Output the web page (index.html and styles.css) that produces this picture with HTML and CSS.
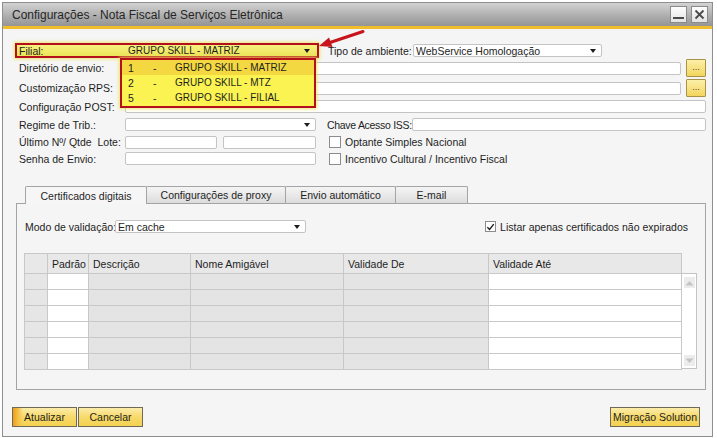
FILE: index.html
```html
<!DOCTYPE html>
<html lang="pt">
<head>
<meta charset="utf-8">
<title>Configurações - Nota Fiscal de Serviços Eletrônica</title>
<link rel="stylesheet" href="styles.css">
</head>
<body>
<div class="window">
  <div class="titlebar">
    <span class="title">Configurações - Nota Fiscal de Serviços Eletrônica</span>
    <div class="wbtns">
      <span class="wbtn"><svg width="15" height="15" viewBox="0 0 15 15"><rect x="2" y="10" width="11" height="2" fill="#4a4a4a"/></svg></span>
      <span class="wbtn"><svg width="15" height="15" viewBox="0 0 15 15"><path d="M3.5 3.5 L11.5 11.5 M11.5 3.5 L3.5 11.5" stroke="#4a4a4a" stroke-width="1.8" fill="none"/></svg></span>
    </div>
  </div>
  <div class="client">
    <div class="form">
      <div class="row r1">
        <div class="filial">
          <span class="lbl">Filial:</span>
          <div class="combo combo-hl"><span class="ctext caps">GRUPO SKILL - MATRIZ</span><span class="arrow"></span></div>
          <div class="dropdown">
            <div class="opt sel"><span class="n">1</span><span class="d">-</span><span class="caps">GRUPO SKILL - MATRIZ</span></div>
            <div class="opt"><span class="n">2</span><span class="d">-</span><span class="caps">GRUPO SKILL - MTZ</span></div>
            <div class="opt"><span class="n">5</span><span class="d">-</span><span class="caps">GRUPO SKILL - FILIAL</span></div>
          </div>
        </div>
        <span class="lbl2 lbl-tipo">Tipo de ambiente:</span>
        <div class="combo w-tipo"><span class="ctext">WebService Homologação</span><span class="arrow"></span></div>
      </div>
      <div class="row r2">
        <span class="lbl">Diretório de envio:</span>
        <div class="inp w-long"></div>
        <div class="ddd">...</div>
      </div>
      <div class="row r3">
        <span class="lbl">Customização RPS:</span>
        <div class="inp w-long"></div>
        <div class="ddd">...</div>
      </div>
      <div class="row r4">
        <span class="lbl">Configuração POST:</span>
        <div class="inp w-full"></div>
      </div>
      <div class="row r5">
        <span class="lbl">Regime de Trib.:</span>
        <div class="combo w-field"><span class="ctext"></span><span class="arrow"></span></div>
        <span class="lbl2 lbl-chave">Chave Acesso ISS:</span>
        <div class="inp w-chave"></div>
      </div>
      <div class="row r6">
        <span class="lbl">Último Nº/ Qtde&nbsp; Lote:</span>
        <div class="inp w-half1"></div>
        <div class="inp w-half2"></div>
        <span class="chk"></span><span class="chk-lbl">Optante Simples Nacional</span>
      </div>
      <div class="row r7">
        <span class="lbl">Senha de Envio:</span>
        <div class="inp w-field"></div>
        <span class="chk"></span><span class="chk-lbl">Incentivo Cultural / Incentivo Fiscal</span>
      </div>
    </div>

    <div class="tabsec">
      <div class="tabstrip">
        <div class="tab active t1">Certificados digitais</div>
        <div class="tab t2">Configurações de proxy</div>
        <div class="tab t3">Envio automático</div>
        <div class="tab t4">E-mail</div>
      </div>
      <div class="panel">
        <div class="modo-row">
          <span class="modo-lbl">Modo de validação:</span>
          <div class="combo w-field"><span class="ctext">Em cache</span><span class="arrow"></span></div>
          <div class="listar">
            <span class="chk checked"><svg width="10" height="10" viewBox="0 0 10 10"><path d="M1.5 5.2 L4 7.8 L8.6 1.8" stroke="#1e1e1e" stroke-width="1.6" fill="none"/></svg></span>
            <span class="chk-lbl">Listar apenas certificados não expirados</span>
          </div>
        </div>
        <div class="gridwrap">
          <table class="grid">
            <colgroup>
              <col class="c0"><col class="c1"><col class="c2"><col class="c3"><col class="c4"><col class="c5">
            </colgroup>
            <thead>
              <tr><th></th><th>Padrão</th><th>Descrição</th><th>Nome Amigável</th><th>Validade De</th><th>Validade Até</th></tr>
            </thead>
            <tbody>
              <tr><td class="rh"></td><td class="w"></td><td></td><td></td><td></td><td class="w"></td></tr>
              <tr><td class="rh"></td><td class="w"></td><td></td><td></td><td></td><td class="w"></td></tr>
              <tr><td class="rh"></td><td class="w"></td><td></td><td></td><td></td><td class="w"></td></tr>
              <tr><td class="rh"></td><td class="w"></td><td></td><td></td><td></td><td class="w"></td></tr>
              <tr><td class="rh"></td><td class="w"></td><td></td><td></td><td></td><td class="w"></td></tr>
              <tr><td class="rh"></td><td class="w"></td><td></td><td></td><td></td><td class="w"></td></tr>
            </tbody>
          </table>
          <div class="vscroll">
            <span class="sbtn"><svg width="9" height="6" viewBox="0 0 9 6"><path d="M0.5 5.5 L4.5 1 L8.5 5.5 Z" fill="#c4c4c4"/></svg></span>
            <span class="sbtn"><svg width="9" height="6" viewBox="0 0 9 6"><path d="M0.5 0.5 L4.5 5 L8.5 0.5 Z" fill="#c4c4c4"/></svg></span>
          </div>
        </div>
      </div>
    </div>

    <div class="footer">
      <div class="btn btn-default">Atualizar</div>
      <div class="btn btn-cancel">Cancelar</div>
      <div class="btn btn-mig">Migração Solution</div>
    </div>
  </div>

  <svg class="callout" width="52" height="24" viewBox="0 0 52 24">
    <path d="M47 3.5 L14 14.5" stroke="#c8141c" stroke-width="3" stroke-linecap="round" fill="none"/>
    <path d="M3 18 L13 9.5 L16.5 19 Z" fill="#c8141c"/>
  </svg>
</div>
</body>
</html>
```
FILE: styles.css
```css
* { box-sizing: border-box; }
html, body { margin: 0; padding: 0; }
body {
  width: 717px;
  height: 438px;
  overflow: hidden;
  background: #ffffff;
  font-family: "Liberation Sans", Arial, sans-serif;
  font-size: 10.5px;
  color: #1e1e1e;
}
.window {
  position: relative;
  margin: 2px 0 0 2px;
  width: 711px;
  height: 435px;
  border: 1px solid #8e8e8e;
  background: #f5f5f5;
  display: flex;
  flex-direction: column;
}
.titlebar {
  flex: none;
  height: 26px;
  border-bottom: 3px solid #f0bd2c;
  background: linear-gradient(#d3d3d3, #ababab 60%, #959595);
  display: flex;
  align-items: center;
  padding: 0 4px 0 9px;
}
.title { flex: 1; font-size: 12px; color: #262626; }
.wbtns { display: flex; gap: 4px; }
.wbtn {
  width: 17px;
  height: 17px;
  border: 1px solid #8a8a8a;
  background: linear-gradient(#fdfdfd, #e2e2e2);
  display: flex;
  align-items: center;
  justify-content: center;
}
.client { flex: 1; display: flex; flex-direction: column; }
.form { padding: 14px 6px 0 12px; }
.row { display: flex; align-items: center; }
.r1 { height: 15px; }
.r2, .r3 { height: 20px; }
.r4 { height: 17px; }
.r5 { height: 19px; }
.r6 { height: 16px; }
.r7 { height: 17px; }
.lbl { flex: none; width: 106px; margin-left: 4px; white-space: nowrap; }
.lbl2 { flex: none; white-space: nowrap; }
.lbl-tipo { width: 85px; margin-left: 9px; }
.lbl-chave { margin-left: 11px; letter-spacing: -0.3px; }
.caps { font-size: 10px; }

.filial {
  position: relative;
  display: flex;
  align-items: center;
  width: 304px;
  height: 15px;
  border: 2px solid #b3101c;
  background: linear-gradient(#f7f27e, #ece35a);
  box-shadow: 0 0 3px 1px rgba(238, 228, 96, 0.9);
}
.filial .lbl { margin-left: 2px; }

.inp, .combo {
  flex: none;
  height: 13px;
  background: #ffffff;
  border: 1px solid #c4c4c4;
  border-radius: 2px;
}
.combo { display: flex; align-items: center; padding-left: 2px; }
.ctext { flex: 1; white-space: nowrap; overflow: hidden; }
.arrow {
  flex: none;
  width: 0;
  height: 0;
  margin-right: 5px;
  border-left: 3.5px solid transparent;
  border-right: 3.5px solid transparent;
  border-top: 4px solid #1e1e1e;
}
.combo-hl { width: 191px; height: 11px; background: transparent; border-color: transparent; }
.w-tipo { width: 189px; }
.w-field { width: 191px; }
.w-long { width: 556px; }
.w-full { width: 581px; }
.w-chave { flex: 1; min-width: 0; }
.w-half1 { width: 92px; }
.w-half2 { width: 93px; margin-left: 6px; }

.ddd {
  flex: none;
  width: 20px;
  height: 18px;
  margin-left: 5px;
  border: 1px solid #a89448;
  border-radius: 1px;
  background: linear-gradient(#fcefaa, #f4d55c);
  font-size: 9px;
  color: #444;
  display: flex;
  align-items: center;
  justify-content: center;
  padding-bottom: 2px;
}

.chk {
  flex: none;
  width: 12px;
  height: 12px;
  border: 1px solid #8c8c8c;
  background: #ffffff;
  margin-left: 13px;
  display: flex;
  align-items: center;
  justify-content: center;
}
.chk-lbl { margin-left: 4px; white-space: nowrap; }

.dropdown {
  position: absolute;
  left: 103px;
  top: 13px;
  width: 196px;
  height: 50px;
  border: 2px solid #b3101c;
  background: #faf352;
  box-shadow: 0 0 3px 1px rgba(238, 228, 96, 0.9);
  z-index: 5;
}
.opt { display: flex; align-items: center; height: 15px; padding-left: 6px; white-space: nowrap; }
.opt.sel { background: #f4d842; }
.opt .n { width: 25px; }
.opt .d { width: 22px; }

.tabsec { margin: 19px 6px 0 13px; }
.tabstrip { display: flex; height: 17px; padding-left: 9px; position: relative; z-index: 1; }
.tab {
  height: 17px;
  border: 1px solid #a4a4a4;
  border-bottom: none;
  border-radius: 2px 2px 0 0;
  background: linear-gradient(#f5f5f5, #dcdcdc);
  display: flex;
  align-items: center;
  justify-content: center;
  white-space: nowrap;
}
.tab + .tab { margin-left: -1px; }
.tab.active { height: 18px; background: #f6f6f6; position: relative; z-index: 2; align-self: flex-start; }
.t1 { width: 122px; }
.t2 { width: 140px; }
.t3 { width: 111px; }
.t4 { width: 73px; }

.panel {
  height: 187px;
  border: 1px solid #a4a4a4;
  background: #f5f5f5;
  padding: 16px 8px 0 7px;
}
.modo-row { display: flex; align-items: center; height: 13px; }
.modo-lbl { flex: none; width: 90px; margin-left: 1px; white-space: nowrap; }
.listar { margin-left: auto; margin-right: 9px; display: flex; align-items: center; }
.listar .chk { margin-left: 0; width: 11px; height: 11px; }

.gridwrap { display: flex; margin-top: 20px; }
.grid {
  border-collapse: collapse;
  table-layout: fixed;
  width: 657px;
  border: 1px solid #c4c4c4;
}
.c0 { width: 23px; }
.c1 { width: 41px; }
.c2 { width: 102px; }
.c3 { width: 153px; }
.c4 { width: 145px; }
.c5 { width: 193px; }
.grid th {
  height: 20px;
  padding: 0 0 0 4px;
  text-align: left;
  font-weight: normal;
  background: #e8e8e8;
  border: 1px solid #c8c8c8;
  white-space: nowrap;
}
.grid td {
  height: 16px;
  padding: 0;
  background: #e4e4e4;
  border: 1px solid #c8c8c8;
}
.grid td.w { background: #ffffff; }
.grid td.rh { background: #e6e6e6; }
.vscroll {
  width: 16px;
  height: 96px;
  margin-top: 20px;
  border: 1px solid #c4c4c4;
  border-left: none;
  background: #ffffff;
  display: flex;
  flex-direction: column;
  justify-content: space-between;
  align-items: center;
  padding: 3px 0 2px;
}
.sbtn {
  width: 11px;
  height: 11px;
  background: #ececec;
  display: flex;
  align-items: center;
  justify-content: center;
}

.footer { display: flex; margin-top: auto; margin-bottom: 9px; padding: 0 12px 0 9px; }
.btn {
  height: 20px;
  border: 1px solid #6f6a58;
  background: linear-gradient(#fcecaa, #f7da6a 50%, #f3d152);
  display: flex;
  align-items: center;
  justify-content: center;
  white-space: nowrap;
}
.btn-default {
  width: 65px;
  background:
    linear-gradient(to right, #ee9b1c 0, #f4c046 5px, rgba(246, 214, 100, 0) 10px),
    linear-gradient(#fcecaa, #f7da6a 50%, #f3d152);
}
.btn-cancel { width: 65px; margin-left: 1px; }
.btn-mig { width: 90px; margin-left: auto; }

.callout {
  position: absolute;
  left: 313px;
  top: 25px;
  z-index: 10;
  overflow: visible;
}
```
